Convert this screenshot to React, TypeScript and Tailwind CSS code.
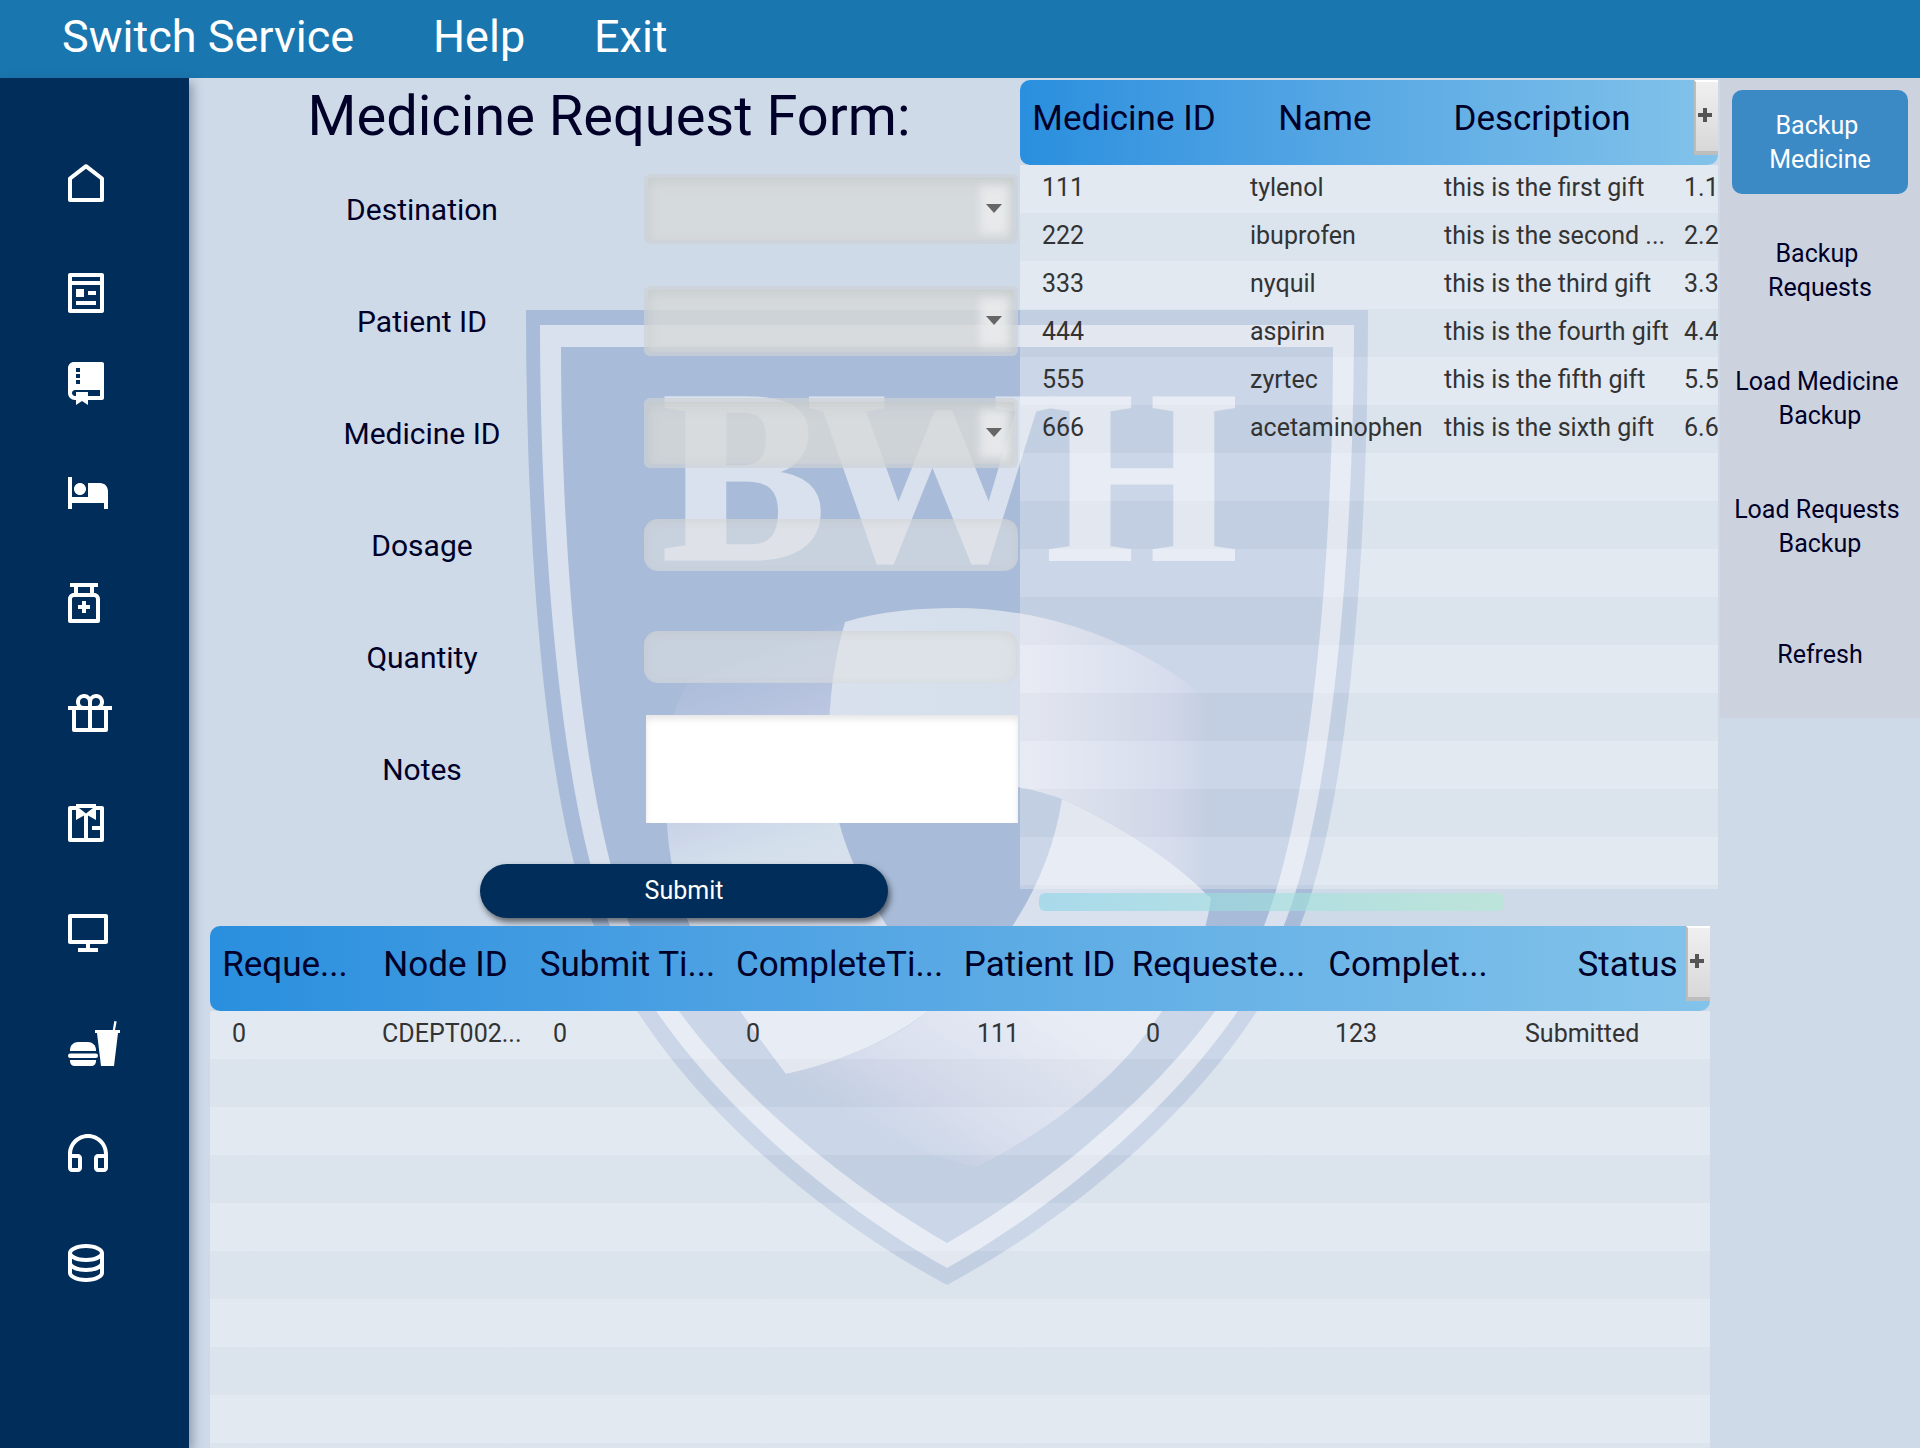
import React from "react";
import {
  RiComputerLine,
  RiDatabase2Line,
  RiGitRepositoryFill,
  RiHeadphoneLine,
  RiHotelBedFill,
  RiMedicineBottleLine,
  RiPagesLine,
} from "react-icons/ri";

const STRIPES =
  "bg-[repeating-linear-gradient(to_bottom,rgba(255,255,255,0.4)_0px,rgba(255,255,255,0.4)_48px,rgba(244,244,244,0.35)_48px,rgba(244,244,244,0.35)_96px)]";

function HomeIcon() {
  return (
    <svg viewBox="3 2 18 19" className="h-[38px] w-9" fill="currentColor" aria-hidden="true">
      <path d="M21 20a1 1 0 0 1-1 1H4a1 1 0 0 1-1-1V9.3a1 1 0 0 1 .39-.8l8-6.2a1 1 0 0 1 1.22 0l8 6.2a1 1 0 0 1 .39.8V20Zm-2-1V9.800l-7-5.400-7 5.400V19h14Z" />
    </svg>
  );
}

function GiftIcon() {
  return (
    <svg viewBox="1 2 22 19" className="h-[38px] w-11" fill="currentColor" aria-hidden="true">
      <path d="M15 2a4 4 0 0 1 3.464 6.001L23 8v2h-2v10a1 1 0 0 1-1 1H4a1 1 0 0 1-1-1V10H1V8l4.536.001A4 4 0 0 1 12 3.355 3.983 3.983 0 0 1 15 2zm-4 8H5v9h6v-9zm8 0h-6v9h6v-9zM9 4a2 2 0 0 0-.15 3.995L9 8h2V6a2 2 0 0 0-1.697-1.977l-.154-.018L9 4zm6 0a2 2 0 0 0-1.995 1.850L13 6v2h2a2 2 0 0 0 1.995-1.850L17 6a2 2 0 0 0-2-2z" />
    </svg>
  );
}

function SuitIcon() {
  return (
    <svg viewBox="3 3 18 19" className="h-[38px] w-9" fill="currentColor" fillRule="evenodd" aria-hidden="true">
      <path d="M7 3h10v1h3a1 1 0 0 1 1 1v16a1 1 0 0 1-1 1H4a1 1 0 0 1-1-1V5a1 1 0 0 1 1-1h3V3Zm1.500 2L12 7.700 15.500 5h-7ZM7 6H5v14h6V8.700L7 11V6Zm10 0v5l-4-2.300V20h6v-4h-4v-2h4V6h-2Z" />
    </svg>
  );
}

function MealIcon() {
  return (
    <svg viewBox="0 0 52 45" className="h-[45px] w-[52px]" fill="currentColor" aria-hidden="true">
      <path d="M2 30v-1c0-5 4-8 8-8h10c4 0 8 3 8 8v1H2Z" />
      <rect x="0" y="32.500" width="30" height="4.500" rx="2.200" />
      <path d="M2 39h26v1c0 3-2 5-5 5H7c-3 0-5-2-5-5v-1Z" />
      <path d="M46.300 0l2.400.4L47 9h5v3h-2l-4 33H33l-4-33h-2V9h17.800l1.500-9Z" />
    </svg>
  );
}

const NAV = [
  { label: "Home", icon: <HomeIcon />, box: "h-[110px]" },
  { label: "Pages", icon: <RiPagesLine viewBox="3 2 18 20" className="h-10 w-9" />, box: "h-[110px]" },
  { label: "Directory", icon: <RiGitRepositoryFill viewBox="3 2 18 21.5" className="h-[43px] w-9" />, box: "mb-5 h-[70px]" },
  { label: "Beds", icon: <RiHotelBedFill viewBox="2 4 20 16" className="h-8 w-10" />, box: "h-[110px]" },
  { label: "Medicine", icon: <RiMedicineBottleLine viewBox="4 2 16 20" className="h-10 w-8" />, box: "h-[110px]" },
  { label: "Gifts", icon: <GiftIcon />, box: "h-[110px]" },
  { label: "Laundry", icon: <SuitIcon />, box: "h-[110px]" },
  { label: "Computers", icon: <RiComputerLine viewBox="2 3 20 19" className="h-[38px] w-10" />, box: "h-[110px]" },
  { label: "Meals", icon: <MealIcon />, box: "h-[110px]" },
  { label: "Support", icon: <RiHeadphoneLine viewBox="2 2 20 19" className="h-[38px] w-10" />, box: "h-[110px]" },
  { label: "Database", icon: <RiDatabase2Line viewBox="3 3 18 19" className="h-[38px] w-9" />, box: "h-[110px]" },
];

function Shield() {
  return (
    <svg
      viewBox="526 310 842 975"
      className="pointer-events-none absolute top-[232px] left-[337px] w-[842px]"
      aria-hidden="true"
    >
      <defs>
        <linearGradient id="left" gradientUnits="userSpaceOnUse" x1="700" y1="650" x2="780" y2="900">
          <stop offset="0" stopColor="#b9c4e1" stopOpacity="0" />
          <stop offset="0.45" stopColor="#c1cae4" />
          <stop offset="0.8" stopColor="#d4dfec" />
          <stop offset="1" stopColor="#d9e0ee" />
        </linearGradient>
        <linearGradient id="top" gradientUnits="userSpaceOnUse" x1="828" y1="0" x2="1208" y2="0">
          <stop offset="0" stopColor="#d9e0ee" />
          <stop offset="0.4" stopColor="#d5e0ec" />
          <stop offset="0.55" stopColor="#d7dcec" />
          <stop offset="0.9" stopColor="#bcc6e1" />
          <stop offset="1" stopColor="#a8bbd8" />
        </linearGradient>
        <linearGradient id="right" gradientUnits="userSpaceOnUse" x1="1010" y1="980" x2="900" y2="1150">
          <stop offset="0" stopColor="#d9e0ee" />
          <stop offset="0.6" stopColor="#c3cbe4" />
          <stop offset="1" stopColor="#a8bbd8" />
        </linearGradient>
      </defs>
      <path
        fill="#a8bbd8"
        d="M526 310H1368C1368 550 1349 820 1294 940C1249 1055 1114 1195 947 1285C780 1195 645 1055 600 940C545 820 526 550 526 310Z"
      />
      <path
        fill="#d9e0ee"
        d="M540 325H1354C1354 550 1332 820 1278 940C1230 1050 1100 1182 947 1268C794 1182 664 1050 616 940C562 820 540 550 540 325Z"
      />
      <path
        fill="#a8bbd8"
        d="M561 347H1333C1333 550 1312 820 1258 940C1212 1040 1090 1160 947 1243C804 1160 682 1040 636 940C582 820 561 550 561 347Z"
      />
      <path
        fill="url(#left)"
        d="M845 622C830 670 826 740 832 790C842 850 865 890 887 926C905 955 925 975 950 990L928 1011C897 1035 850 1060 786 1074C745 1020 710 970 690 926C675 890 668 850 667 822C662 760 665 720 690 680Z"
      />
      <path
        fill="url(#right)"
        d="M1062 799C1118 824 1176 862 1211 898C1205 945 1185 980 1162 1011C1120 1077 1050 1130 976 1167C900 1150 830 1110 786 1074C850 1060 900 1035 928 1011C1000 965 1050 880 1062 799Z"
      />
      <path
        fill="url(#top)"
        d="M845 622C880 611 920 608 954 608C1060 608 1150 650 1208 700V896C1176 862 1118 824 1062 799C1045 793 1030 789 1017 787C950 775 880 785 832 800C826 740 828 680 845 622Z"
      />
      <g
        fill="#d9e0ee"
        stroke="#d9e0ee"
        strokeWidth="3"
        fontFamily="'Liberation Serif', serif"
        fontWeight="700"
        fontSize="246"
        textAnchor="middle"
      >
        <text x="744" y="559">B</text>
        <text x="930" y="559">W</text>
        <text x="1142" y="559">H</text>
      </g>
    </svg>
  );
}

function ColumnMenuButton({ label }: { label: string }) {
  return (
    <button
      type="button"
      aria-label={label}
      className="absolute top-0 right-0 flex h-[75px] w-6 items-center justify-center border-2 border-r-0 border-b-4 border-[#bdbdbd] border-t-white bg-linear-to-b from-[#f0f0f0] to-[#d8d8d8] pr-1 pb-1"
    >
      <svg viewBox="0 0 14 14" className="size-3.5 shrink-0" fill="#555" aria-hidden="true">
        <path d="M5 0h4v5h5v4H9v5H5V9H0V5h5z" />
      </svg>
    </button>
  );
}

type Column = { title: string; width: string };

function DataTable({ name, columns, rows }: { name: string; columns: Column[]; rows: string[][] }) {
  return (
    <div className="relative flex grow flex-col overflow-hidden">
      <table className="flex grow flex-col" aria-label={name}>
        <thead className="block overflow-hidden rounded-[10px] bg-linear-to-r from-[#298fde] to-[#82c3ea]">
          <tr className="flex h-[85px]">
            {columns.map((c) => (
              <th
                key={c.title}
                scope="col"
                className={`${c.width} shrink-0 pt-[18px] text-center text-[35px] leading-[42px] font-normal whitespace-nowrap text-[#000028]`}
              >
                {c.title}
              </th>
            ))}
          </tr>
        </thead>
        <tbody className={`block grow ${STRIPES}`}>
          {rows.map((row, r) => (
            <tr key={r} className="flex h-12">
              {row.map((cell, i) => (
                <td
                  key={i}
                  className={`${columns[i].width} shrink-0 pt-2 pl-[22px] text-[25px] leading-[30px] whitespace-nowrap text-[#333]`}
                >
                  {cell}
                </td>
              ))}
            </tr>
          ))}
        </tbody>
      </table>
      <ColumnMenuButton label={`${name} columns`} />
    </div>
  );
}

const MEDICINE_COLUMNS: Column[] = [
  { title: "Medicine ID", width: "w-[208px]" },
  { title: "Name", width: "w-[194px]" },
  { title: "Description", width: "w-[240px]" },
  { title: "", width: "w-[120px]" },
];

const MEDICINES = [
  ["111", "tylenol", "this is the first gift", "1.11"],
  ["222", "ibuprofen", "this is the second ...", "2.22"],
  ["333", "nyquil", "this is the third gift", "3.33"],
  ["444", "aspirin", "this is the fourth gift", "4.44"],
  ["555", "zyrtec", "this is the fifth gift", "5.55"],
  ["666", "acetaminophen", "this is the sixth gift", "6.66"],
];

const REQUEST_COLUMNS: Column[] = [
  { title: "Reque...", width: "w-[150px]" },
  { title: "Node ID", width: "w-[171px]" },
  { title: "Submit Ti...", width: "w-[193px]" },
  { title: "CompleteTi...", width: "w-[231px]" },
  { title: "Patient ID", width: "w-[169px]" },
  { title: "Requeste...", width: "w-[189px]" },
  { title: "Complet...", width: "w-[190px]" },
  { title: "Status", width: "w-[249px]" },
];

const REQUESTS = [["0", "CDEPT002...", "0", "0", "111", "0", "123", "Submitted"]];

function Row({ id, label, children }: { id: string; label: string; children: React.ReactNode }) {
  return (
    <div className="grid h-28 grid-cols-[424fr_386fr] items-center">
      <label htmlFor={id} className="text-center text-[30px] text-[#000028]">
        {label}
      </label>
      <div className="pr-0.5 pl-2.5">{children}</div>
    </div>
  );
}

function Combo({ id, label }: { id: string; label: string }) {
  return (
    <Row id={id} label={label}>
      <div className="relative">
        <select
          id={id}
          className="block h-[70px] w-full appearance-none rounded-md border-4 border-[#cfd1d6]/70 bg-[#d7dad8]/80 bg-clip-padding px-4 text-[25px] shadow-[inset_0_4px_12px_rgba(160,165,165,0.25)]"
        />
        <div className="pointer-events-none absolute top-3 right-2.5 flex h-12 w-7 items-center justify-center pb-1">
          <div className="absolute inset-0 bg-[#ebecee]/80 blur-[4px]" />
          <svg viewBox="0 0 16 9" className="relative h-[9px] w-4" fill="#666" aria-hidden="true">
            <path d="M0 0h16L8 9z" />
          </svg>
        </div>
      </div>
    </Row>
  );
}

function Field({ id, label }: { id: string; label: string }) {
  return (
    <Row id={id} label={label}>
      <input
        id={id}
        type="text"
        className="block h-[52px] w-full rounded-[14px] bg-[#e1e4e3]/55 px-4 text-[25px] shadow-[inset_0_2px_10px_rgba(190,190,180,0.35)]"
      />
    </Row>
  );
}

const ACTIONS = ["Backup \nMedicine", "Backup \nRequests", "Load Medicine \nBackup", "Load Requests \nBackup", "Refresh"];

export default function App() {
  return (
    <div className="flex min-h-screen flex-col bg-[#cedae8] font-['Roboto',sans-serif]">
      <header className="flex h-[78px] shrink-0 items-center bg-[#1976af] pb-1 pl-[62px] text-[45px] text-white">
        <button type="button" className="w-[371px] text-left">Switch Service</button>
        <button type="button" className="w-[161px] text-left">Help</button>
        <button type="button">Exit</button>
      </header>
      <div className="flex grow">
        <nav className="z-10 w-[189px] shrink-0 bg-[#002d59] pt-[50px] text-white shadow-[4px_4px_10px_rgba(60,60,90,0.4)]">
          {NAV.map((n) => (
            <button
              key={n.label}
              type="button"
              aria-label={n.label}
              className={`flex w-full items-center pl-[68px] ${n.box}`}
            >
              {n.icon}
            </button>
          ))}
        </nav>
        <main className="relative flex min-w-0 grow flex-col pl-[21px]">
          <Shield />
          <div className="relative grid h-[848px] grid-cols-[810fr_700fr_200px]">
            <form onSubmit={(e) => e.preventDefault()}>
              <h1 className="flex h-[75px] items-center justify-center pr-3 text-[56px] leading-[66px] text-[#000028]">
                Medicine Request Form:
              </h1>
              <Combo id="destination" label="Destination" />
              <Combo id="patient" label="Patient ID" />
              <Combo id="medicine" label="Medicine ID" />
              <Field id="dosage" label="Dosage" />
              <Field id="quantity" label="Quantity" />
              <Row id="notes" label="Notes">
                <div className="pl-0.5">
                  <textarea
                    id="notes"
                    className="block h-[108px] w-full resize-none bg-white p-3 text-[25px] shadow-[inset_0_4px_6px_rgba(0,0,0,0.1)]"
                  />
                </div>
              </Row>
              <button
                type="submit"
                className="mt-[39px] ml-[270px] h-[54px] w-[408px] rounded-full bg-[#002d59] text-[25px] text-white shadow-[2px_4px_6px_rgba(0,0,0,0.55)]"
              >
                Submit
              </button>
            </form>
            <div className="flex min-w-0 flex-col pt-0.5 pr-0.5">
              <div className="flex h-[809px]">
                <DataTable name="Medicines" columns={MEDICINE_COLUMNS} rows={MEDICINES} />
              </div>
              <div className="mt-1 ml-[19px] h-[18px] w-2/3 rounded-md bg-linear-to-r from-[#89d6e8]/60 to-[#b2ebd0]/60" />
            </div>
            <aside className="grid auto-rows-[128px] content-start">
              {ACTIONS.map((a, i) => (
                <div key={a} className="bg-[#ccd3df] px-3 py-3">
                  <button
                    type="button"
                    className={`h-[104px] w-full rounded-[10px] pt-0.5 text-[25px] leading-[34px] whitespace-pre ${
                      i === 0 ? "bg-[#3b8ac6] text-white" : "text-[#000028]"
                    }`}
                  >
                    {a}
                  </button>
                </div>
              ))}
            </aside>
          </div>
          <div className="relative mr-[210px] flex grow">
            <DataTable name="Requests" columns={REQUEST_COLUMNS} rows={REQUESTS} />
          </div>
        </main>
      </div>
    </div>
  );
}
